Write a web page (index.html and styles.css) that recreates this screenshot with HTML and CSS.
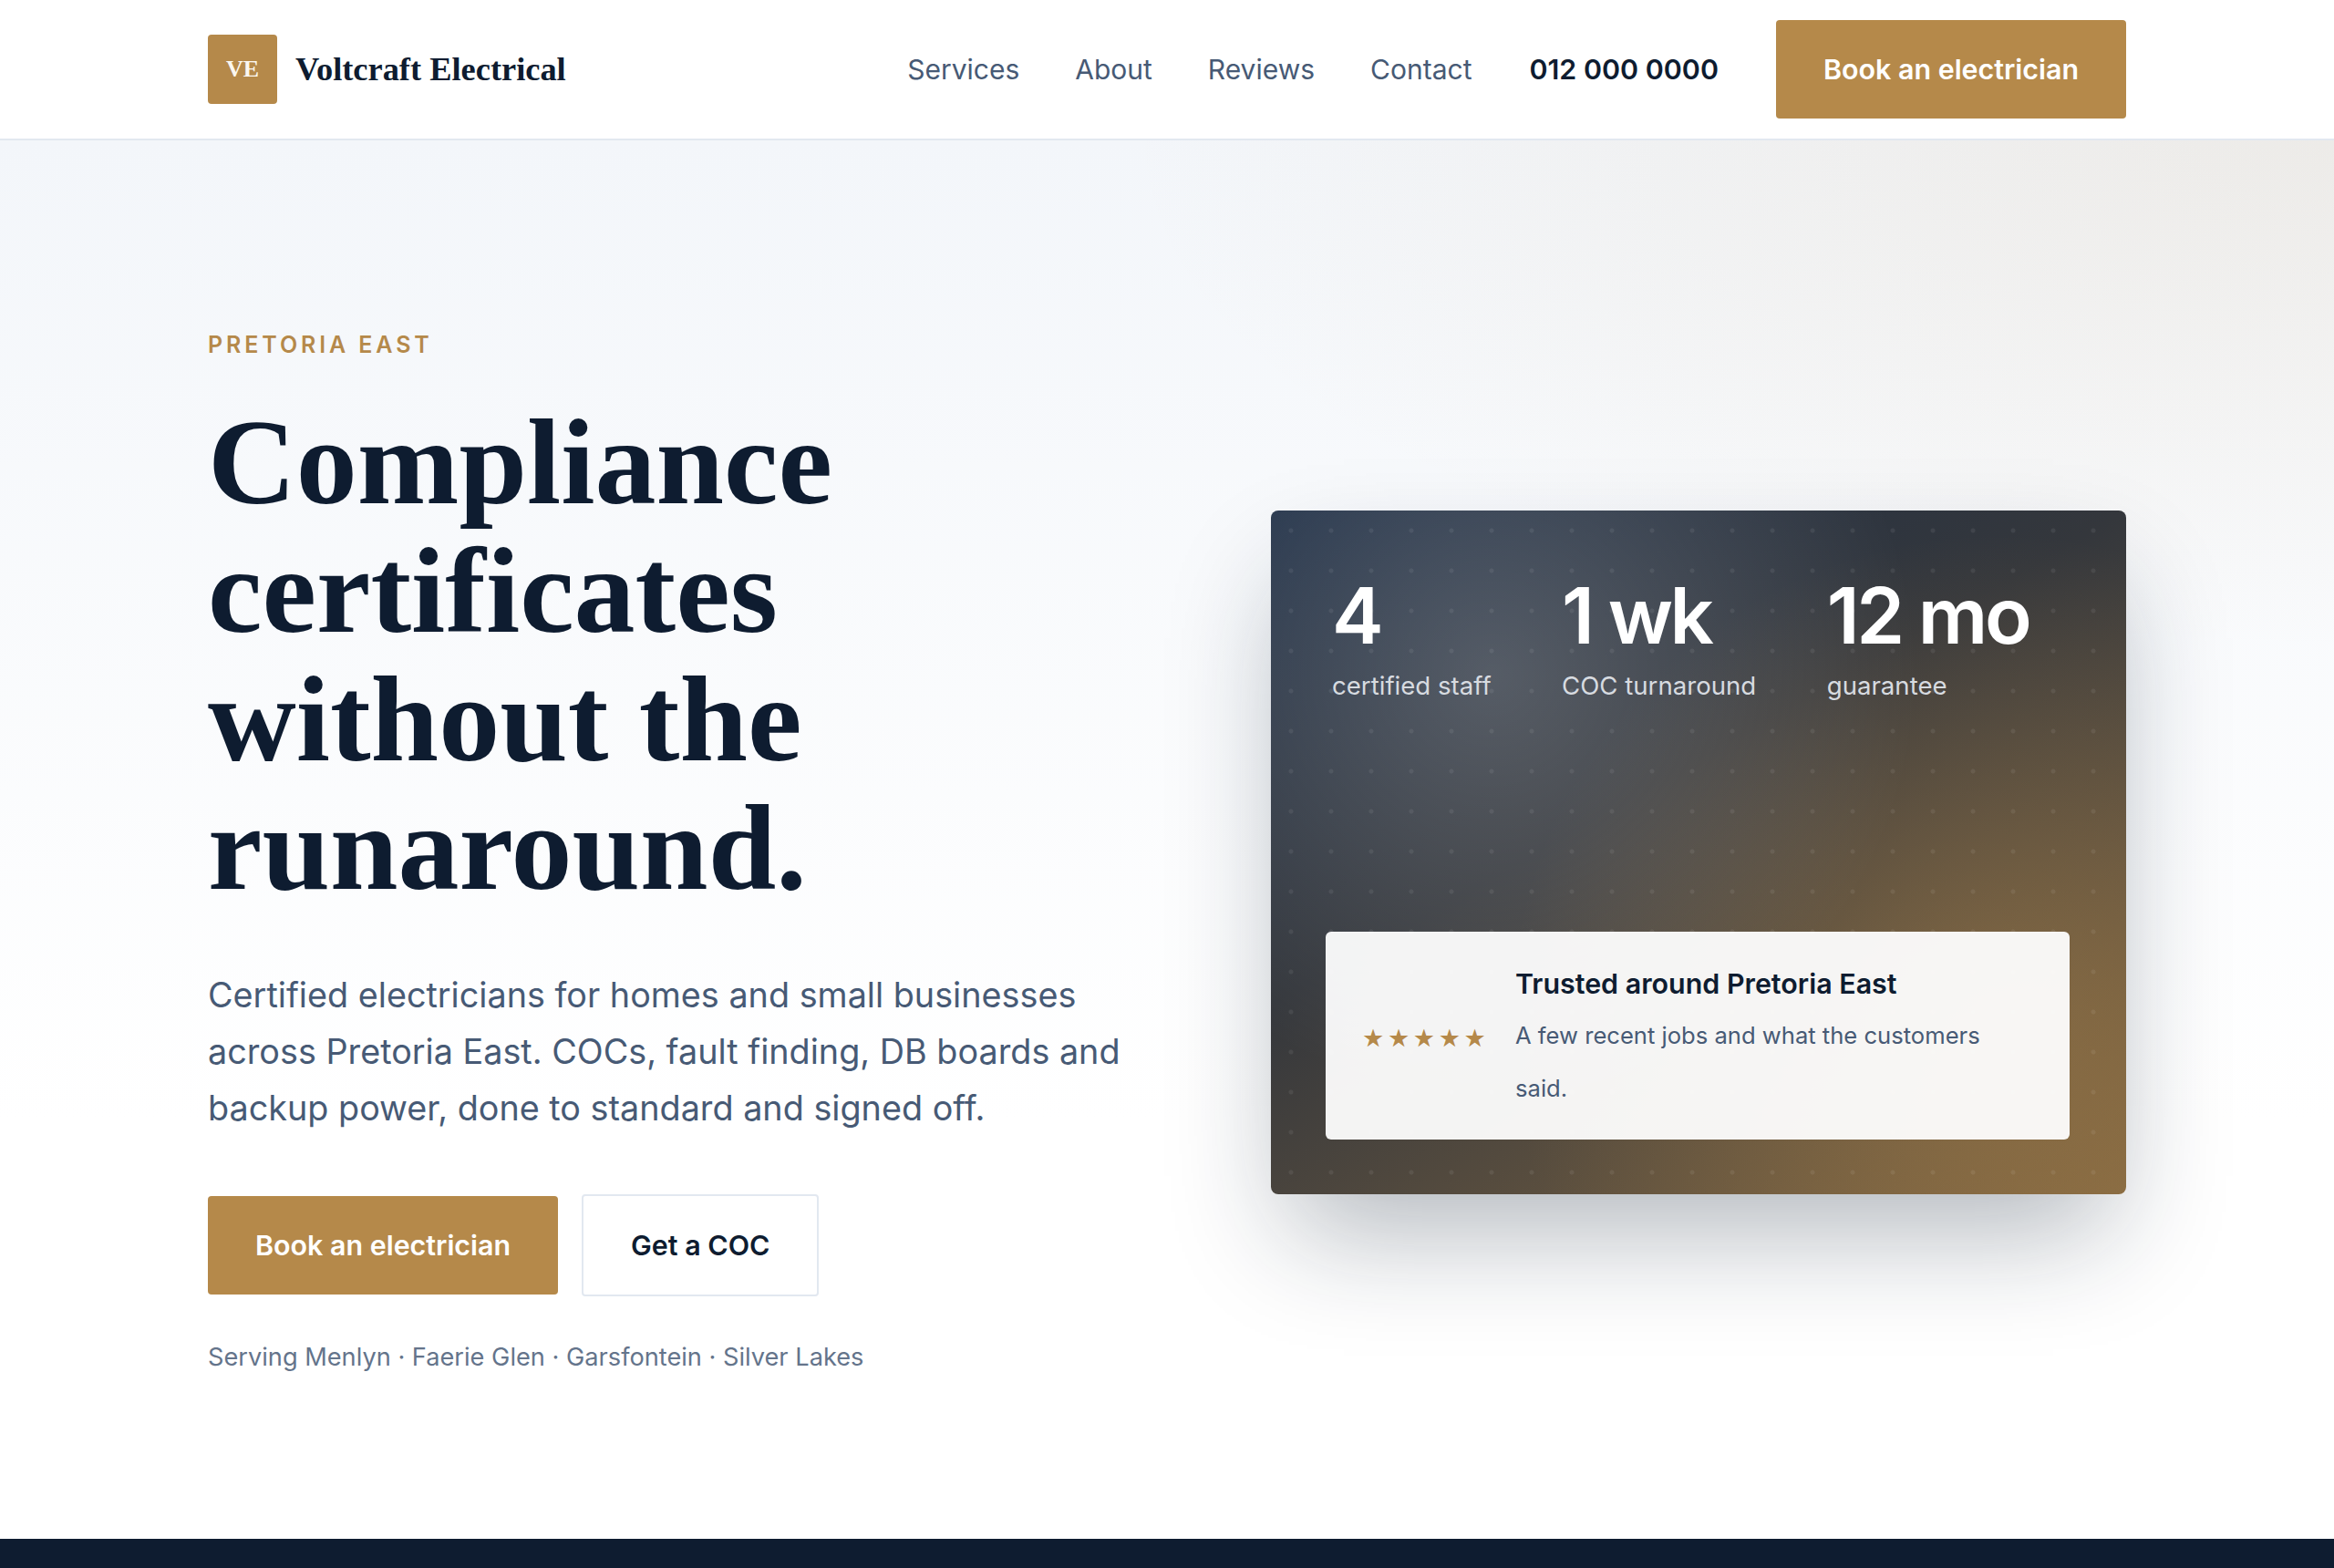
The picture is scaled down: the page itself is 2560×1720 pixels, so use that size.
FILE: index.html
```html
<!DOCTYPE html>
<html lang="en">
  <head>
    <meta charset="UTF-8" />
    <title>Voltcraft Electrical</title>
    <link rel="stylesheet" href="styles.css">
  </head>
  <body>
    <header class="site-header">
      <a class="brand" href="#">
        <span class="brand-mark">VE</span>
        <span class="brand-name">Voltcraft Electrical</span>
      </a>
      <nav class="site-nav">
        <a class="nav-link" href="#">Services</a>
        <a class="nav-link" href="#">About</a>
        <a class="nav-link" href="#">Reviews</a>
        <a class="nav-link" href="#">Contact</a>
        <a class="nav-phone" href="#">012 000 0000</a>
        <a class="btn btn-gold" href="#">Book an electrician</a>
      </nav>
    </header>

    <main class="hero">
      <div class="hero-copy">
        <p class="eyebrow">PRETORIA EAST</p>
        <h1 class="hero-title">Compliance certificates without the runaround.</h1>
        <p class="hero-lead">Certified electricians for homes and small businesses across Pretoria East. COCs, fault finding, DB boards and backup power, done to standard and signed off.</p>
        <div class="hero-actions">
          <a class="btn btn-gold" href="#">Book an electrician</a>
          <a class="btn btn-outline" href="#">Get a COC</a>
        </div>
        <p class="hero-areas">Serving Menlyn · Faerie Glen · Garsfontein · Silver Lakes</p>
      </div>

      <aside class="panel">
        <div class="stats">
          <div class="stat">
            <div class="stat-value">4</div>
            <div class="stat-label">certified staff</div>
          </div>
          <div class="stat">
            <div class="stat-value">1 wk</div>
            <div class="stat-label">COC turnaround</div>
          </div>
          <div class="stat">
            <div class="stat-value">12 mo</div>
            <div class="stat-label">guarantee</div>
          </div>
        </div>
        <div class="trust-card">
          <div class="stars">★★★★★</div>
          <div class="trust-text">
            <h2 class="trust-title">Trusted around Pretoria East</h2>
            <p class="trust-copy">A few recent jobs and what the customers said.</p>
          </div>
        </div>
      </aside>
    </main>

    <div class="next-band"></div>
  </body>
</html>
```

FILE: styles.css
```css
* {
  box-sizing: border-box;
}
html,
body {
  margin: 0;
  padding: 0;
}
body {
  font-family: Inter, "Noto Sans", sans-serif;
  color: #0e1c30;
  background: #ffffff;
}
a {
  text-decoration: none;
  color: inherit;
}

/* Header */
.site-header {
  display: flex;
  justify-content: space-between;
  align-items: center;
  height: 154px;
  padding: 0 228px;
  background: #ffffff;
  border-bottom: 2px solid #e2e8f0;
}
.brand {
  display: flex;
  align-items: center;
  gap: 20px;
}
.brand-mark {
  display: flex;
  justify-content: center;
  align-items: center;
  width: 76px;
  height: 76px;
  border-radius: 4px;
  background: #b5894a;
  color: #fbf7ef;
  font-family: "Liberation Serif", serif;
  font-weight: 700;
  font-size: 26px;
}
.brand-name {
  font-family: "Liberation Serif", serif;
  font-weight: 700;
  font-size: 36.4px;
  color: #0e1c30;
}
.site-nav {
  display: flex;
  align-items: center;
  gap: 61px;
}
.nav-link {
  font-size: 30px;
  color: #475a75;
}
.nav-phone {
  margin: 0 2px;
  font-size: 30.4px;
  font-weight: 600;
  color: #0e1c30;
}
.btn {
  display: inline-flex;
  justify-content: center;
  align-items: center;
  height: 108px;
  padding: 0 52px;
  border-radius: 4px;
  font-size: 30.4px;
  font-weight: 600;
}
.btn-gold {
  background: #b5894a;
  color: #ffffff;
}
.btn-outline {
  height: 112px;
  background: #ffffff;
  border: 2px solid #e2e8f0;
  color: #0e1c30;
}

/* Hero */
.hero {
  display: grid;
  grid-template-columns: 1fr 938px;
  align-items: center;
  gap: 60px;
  height: 1534px;
  padding: 28px 228px 0;
  background:
    radial-gradient(ellipse 1900px 800px at 100% 0, rgba(181, 137, 74, 0.1), transparent 70%),
    linear-gradient(180deg, #f3f6fa 0, #ffffff 70%);
}
.hero-copy {
  margin-bottom: 2px;
}
.eyebrow {
  margin: 0 0 44px;
  font-size: 25px;
  font-weight: 600;
  letter-spacing: 3.9px;
  color: #b5894a;
}
.hero-title {
  margin: 0 0 59px;
  max-width: 760px;
  font-family: "Liberation Serif", serif;
  font-weight: 700;
  font-size: 134px;
  line-height: 140.8px;
  color: #0e1c30;
}
.hero-lead {
  margin: 0 0 64px;
  max-width: 1040px;
  font-size: 37.75px;
  line-height: 62px;
  color: #475a75;
}
.hero-actions {
  display: flex;
  align-items: center;
  gap: 26px;
  margin-bottom: 50px;
}
.hero-areas {
  margin: 0;
  font-size: 27.2px;
  color: #64748b;
}

/* Stat panel */
.panel {
  display: flex;
  flex-direction: column;
  justify-content: space-between;
  height: 750px;
  padding: 66px 62px 60px 60px;
  border-radius: 8px;
  background:
    radial-gradient(circle at 22px 22px, rgba(255, 255, 255, 0.07) 2px, transparent 3px) 0 0 / 44px 44px,
    radial-gradient(circle at 26% 24%, rgba(255, 255, 255, 0.2), transparent 52%),
    radial-gradient(circle at 85% 75%, rgba(181, 137, 74, 0.4), transparent 55%),
    linear-gradient(150deg, #1f2f46 0, #34373c 42%, #7f6541 100%);
  box-shadow: 0 60px 120px -20px rgba(15, 30, 51, 0.32);
}
.stats {
  display: flex;
  gap: 77.5px;
  padding-left: 7px;
}
.stat-value {
  font-size: 85px;
  font-weight: 600;
  line-height: 100px;
  letter-spacing: -3.4px;
  color: #ffffff;
}
.stat-label {
  margin-top: 9px;
  font-size: 27.6px;
  color: #d7dbe0;
}
.trust-card {
  display: flex;
  align-items: center;
  gap: 34px;
  height: 228px;
  padding: 4px 40px 0;
  border-radius: 6px;
  background: rgba(255, 255, 255, 0.94);
}
.stars {
  flex: none;
  width: 134px;
  font-family: "DejaVu Sans", sans-serif;
  font-size: 27px;
  letter-spacing: 3.7px;
  white-space: nowrap;
  color: #b5894a;
}
.trust-title {
  margin: 0 0 3px;
  font-size: 30.4px;
  font-weight: 600;
  line-height: 50px;
  color: #0e1c30;
}
.trust-copy {
  margin: 0;
  font-size: 25.6px;
  line-height: 57.6px;
  color: #475a75;
}

.next-band {
  height: 32px;
  background: #0e1c30;
}
```
